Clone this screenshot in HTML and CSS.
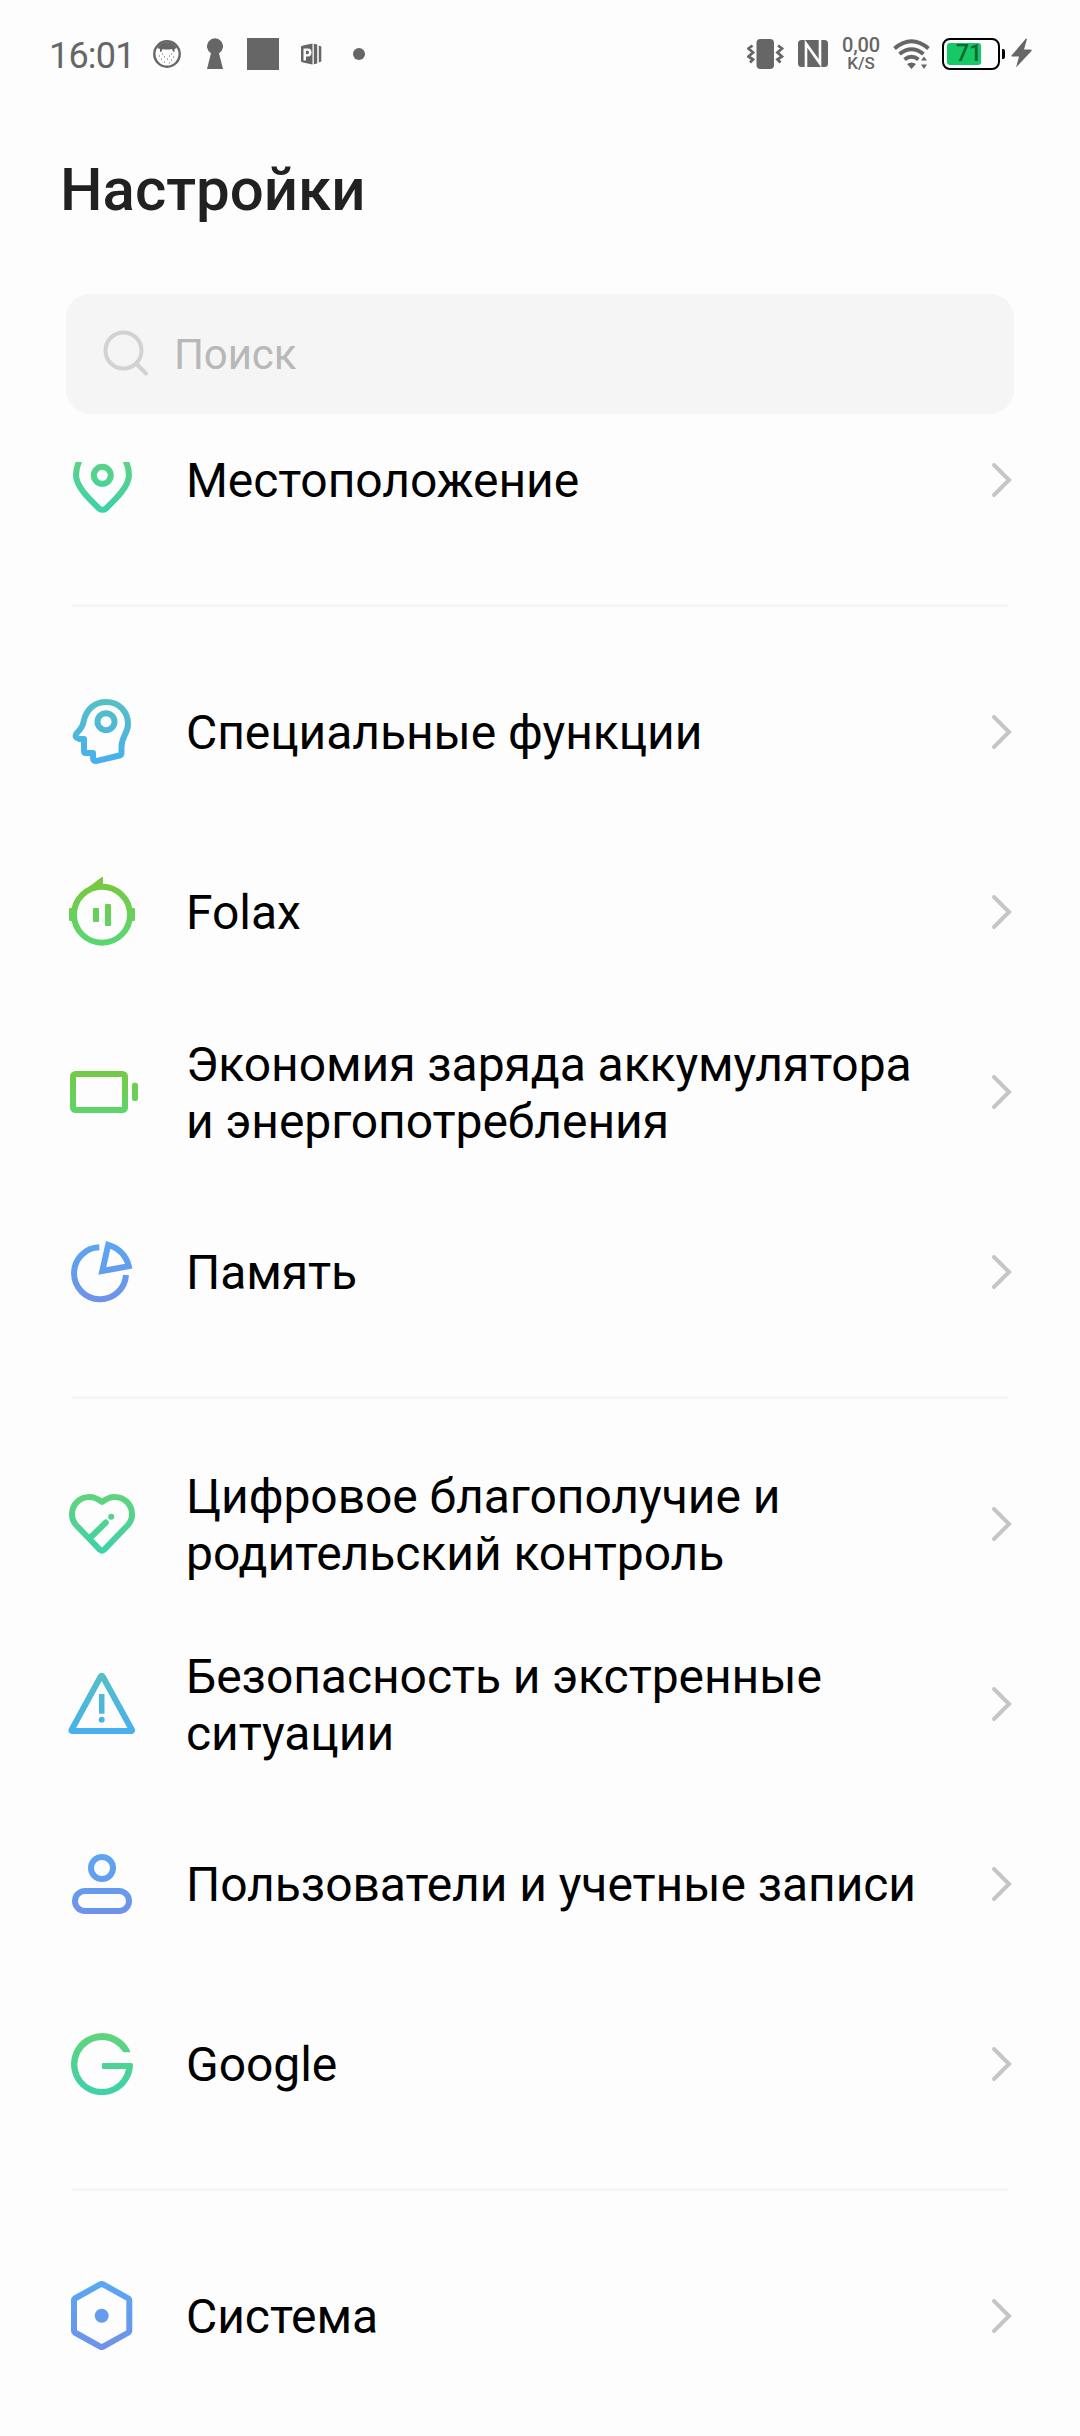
FILE: index.html
```html
<!DOCTYPE html>
<html lang="ru">
<head>
    <meta charset="UTF-8">
    <meta name="viewport" content="width=device-width, initial-scale=1.0">
    <title>Настройки</title>
    <link rel="stylesheet" href="styles.css">
</head>
<body>
    <!-- shared gradients and the row arrow -->
    <svg class="defs" width="0" height="0">
        <defs>
            <linearGradient id="mint" gradientUnits="userSpaceOnUse" x1="0" y1="4" x2="0" y2="68">
                <stop offset="0" stop-color="#62d47a"/><stop offset="1" stop-color="#3dd1ac"/>
            </linearGradient>
            <linearGradient id="aqua" gradientUnits="userSpaceOnUse" x1="0" y1="4" x2="0" y2="68">
                <stop offset="0" stop-color="#55c0c4"/><stop offset="1" stop-color="#47aff0"/>
            </linearGradient>
            <linearGradient id="lime" gradientUnits="userSpaceOnUse" x1="0" y1="10" x2="0" y2="62">
                <stop offset="0" stop-color="#78c940"/><stop offset="1" stop-color="#5ad670"/>
            </linearGradient>
            <linearGradient id="blue" gradientUnits="userSpaceOnUse" x1="0" y1="4" x2="0" y2="68">
                <stop offset="0" stop-color="#5aa7f2"/><stop offset="1" stop-color="#6f91ea"/>
            </linearGradient>
            <symbol id="arrow" viewBox="0 0 24 40">
                <path d="M4 5l15 15L4 35" fill="none" stroke="#c6c6c6" stroke-width="4" stroke-linecap="round" stroke-linejoin="miter"/>
            </symbol>
        </defs>
    </svg>

    <div class="statusbar">
        <div class="status-left">
            <span class="clock">16:01</span>
            <svg class="s-face" width="28" height="32" viewBox="0 0 28 32">
                <circle cx="14" cy="16" r="12.7" fill="none" stroke="#666" stroke-width="2.400"/>
                <path d="M4 10A11.500 11.500 0 0 1 24 10L21.500 11V14L20 13.500L19 11Q14 12 9.500 11L8.500 13.500L7 14V11z" fill="#666"/>
                <path d="M9 16h1.200M18 16h1.200M6 18h1M11 19h1M16 18h1M20 19h1M8 21h1M14 21h1M18 22h1M11 24h1M16 25h1" stroke="#666" stroke-width="1.200"/>
            </svg>
            <svg class="s-key" width="16" height="32" viewBox="0 0 16 32">
                <path d="M4 15.200A8 8 0 1 1 12 15.200L16 31H0z" fill="#666"/>
            </svg>
            <span class="s-square"></span>
            <svg class="s-app" width="21" height="32" viewBox="0 0 21 32">
                <path fill="#666" fill-rule="evenodd" d="M0 8.500L2 7.500L11.500 5.500V26.500L2 24.500L0 23.500zM2.500 10.500V22.500H5V18.500H7Q10.500 18.500 10.500 14.500Q10.500 10.500 7 10.500zM5 12.800H6.500Q8 12.800 8 14.500Q8 16.200 6.500 16.200H5z"/>
                <path fill="#666" d="M12.800 5.700L16.200 6.500V25.500L12.800 26.300zM17.800 7.500L20.300 8.500V23.500L17.800 24.500z"/>
            </svg>
            <span class="s-dot"></span>
        </div>
        <div class="status-right">
            <svg width="37" height="32" viewBox="0 0 37 32" fill="none" stroke="#666" stroke-width="2.800">
                <rect x="9.500" y="1" width="17.500" height="30" rx="4" fill="#666" stroke="none"/>
                <path d="M5.500 7.500L1.500 10.500L6 14.500L1.500 18.500L6 21.500L3 24.500M31 7.500L35 10.500L30.500 14.500L35 18.500L30.500 21.500L33.500 24.500"/>
            </svg>
            <svg class="s-nfc" width="30" height="32" viewBox="0 0 30 32">
                <rect y="2" width="30" height="27" rx="3.500" fill="#666"/>
                <path d="M8 29V5.500L20.500 23M22 2V25.500L10 8.500" fill="none" stroke="#fdfdfd" stroke-width="2.600"/>
            </svg>
            <div class="speed">
                <span class="speed-value">0,00</span>
                <span class="speed-unit">K/S</span>
            </div>
            <svg class="s-wifi" width="37" height="32" viewBox="0 0 37 32">
                <g fill="none" stroke="#666" stroke-width="4">
                    <path d="M1.500 10.500Q18.500 -4 35.500 10.500"/>
                    <path d="M6.500 16Q18.500 6.500 30.500 16"/>
                    <path d="M11.500 21.500Q18.500 16 25.500 21.500"/>
                </g>
                <path d="M14 26Q18.500 23 23 26L18.500 31zM28 22.500L31 18.500L34 22.500zM28 26.500L31 31L34 26.500z" fill="#666"/>
            </svg>
            <div class="battery">
                <div class="battery-level"></div>
                <span class="battery-text">71</span>
            </div>
            <span class="battery-tip"></span>
            <svg class="s-bolt" width="21" height="32" viewBox="0 0 21 32">
                <path d="M15 0.500L0.500 17.500Q0 18.500 1.500 18.500H8L5 29.500L20.500 13Q21 11.500 19.500 11.500H13L16 1z" fill="#666"/>
            </svg>
        </div>
    </div>

    <h1>Настройки</h1>

    <div class="search">
        <svg width="48" height="48" viewBox="0 0 48 48" fill="none" stroke="#d2d2d2" stroke-width="4" stroke-linecap="round">
            <circle cx="21.500" cy="20.500" r="18"/>
            <path d="M34.500 34L44 43.500"/>
        </svg>
        <span>Поиск</span>
    </div>

    <div class="list">
        <div class="group">
            <div class="row">
                <svg class="icon mint" viewBox="0 0 72 72">
                    <path d="M36.500 1C28 1 20 6 15.500 13C12 18.500 10 24 10 31C10 42 22 54 33 64.500Q36.500 67 40 64.500C51 54 63 42 63 31C63 24 61 18.500 57.500 13C53 6 45 1 36.500 1z"/>
                    <circle cx="36.300" cy="31.300" r="8.500"/>
                </svg>
                <span class="label">Местоположение</span>
                <svg class="arrow"><use href="#arrow"/></svg>
            </div>
        </div>
        <div class="group">
            <div class="row">
                <svg class="icon aqua" viewBox="0 0 72 72">
                    <path d="M10.500 37.500Q16.500 31.500 17.500 26C20 13 29 6 40 6C53 6 62 15.500 62 28C62 38 55.500 40 55.500 51V57Q55.500 59 53.500 59.500L31 64.800Q27 65.500 27 62V57H19.500Q18 57 18 55V43H13Q8 41.500 10.500 37.500z"/>
                    <circle cx="40" cy="25.700" r="8.500"/>
                </svg>
                <span class="label">Специальные функции</span>
                <svg class="arrow"><use href="#arrow"/></svg>
            </div>
            <div class="row">
                <svg class="icon lime" viewBox="0 0 72 72">
                    <circle cx="36" cy="38.700" r="28"/>
                    <path class="solid" d="M22 11.500L35.500 1.200Q37 .5 37 2V10zM4 32H9V45H4Q3 45 3 44V33Q3 32 4 32zM63 32H68Q69 32 69 33V44Q69 45 68 45H63z"/>
                    <rect class="solid" x="27" y="32" width="6" height="14" rx="1"/>
                    <rect class="solid" x="39" y="28" width="6" height="22" rx="1"/>
                </svg>
                <span class="label">Folax</span>
                <svg class="arrow"><use href="#arrow"/></svg>
            </div>
            <div class="row">
                <svg class="icon lime" viewBox="0 0 72 72">
                    <rect x="7" y="18" width="52" height="36" rx="2.500"/>
                    <rect class="solid" x="66" y="26.700" width="6" height="18.300" rx="2.500"/>
                </svg>
                <span class="label two-line">Экономия заряда аккумулятора и энергопотребления</span>
                <svg class="arrow"><use href="#arrow"/></svg>
            </div>
            <div class="row">
                <svg class="icon blue sharp" viewBox="0 0 72 72">
                    <path d="M33.300 11.300A26 26 0 1 0 60 39"/>
                    <path d="M42.200 8.800A29 29 0 0 1 62.800 30.200L36.300 35z"/>
                </svg>
                <span class="label">Память</span>
                <svg class="arrow"><use href="#arrow"/></svg>
            </div>
        </div>
        <div class="group">
            <div class="row">
                <svg class="icon mint" viewBox="0 0 72 72">
                    <path d="M36 14C31.500 10.500 28 9 23.500 9C13 9 6 17 6 26.500C6 31 8 35 11 38L34 61.800Q36 63.500 38 61.800L61 38C64 35 66 31 66 26.500C66 17 59 9 48.500 9C44 9 40.500 10.500 36 14zM25 49L39.800 34.500"/>
                    <circle class="solid" cx="45.200" cy="28.700" r="3"/>
                </svg>
                <span class="label two-line">Цифровое благополучие и родительский контроль</span>
                <svg class="arrow"><use href="#arrow"/></svg>
            </div>
            <div class="row">
                <svg class="icon aqua" viewBox="0 0 72 72">
                    <path d="M34.700 8.500Q35.700 7 36.700 8.500L66 62Q66.500 63 65.500 63H6Q5 63 5.500 62z"/>
                    <rect class="solid" x="33" y="26" width="5.500" height="19.700"/>
                    <circle class="solid" cx="35.700" cy="51.700" r="3"/>
                </svg>
                <span class="label two-line">Безопасность и экстренные ситуации</span>
                <svg class="arrow"><use href="#arrow"/></svg>
            </div>
            <div class="row">
                <svg class="icon blue" viewBox="0 0 72 72">
                    <circle cx="36" cy="20" r="11"/>
                    <rect x="9" y="43" width="54" height="20" rx="10"/>
                </svg>
                <span class="label">Пользователи и учетные записи</span>
                <svg class="arrow"><use href="#arrow"/></svg>
            </div>
            <div class="row">
                <svg class="icon mint" viewBox="0 0 72 72">
                    <path class="solid" d="M63.500 24.300Q64.700 24.300 64.200 23.200A31 31 0 1 0 67 37Q67 35 65.500 35H37Q36 35 36 36V40Q36 41 37 41H60A24.500 24.500 0 1 1 56.500 23.200Q57 24.300 58.200 24.300z"/>
                </svg>
                <span class="label">Google</span>
                <svg class="arrow"><use href="#arrow"/></svg>
            </div>
        </div>
        <div class="group">
            <div class="row">
                <svg class="icon blue" viewBox="0 0 72 72">
                    <path d="M34.700 4.200Q35.700 3.700 36.700 4.200L62.500 18.500Q63.300 19 63.300 20V51Q63.300 52 62.500 52.500L36.700 66.800Q35.700 67.300 34.700 66.800L8.800 52.500Q8 52 8 51V20Q8 19 8.800 18.500z"/>
                    <circle class="solid" cx="35.700" cy="35.700" r="7"/>
                </svg>
                <span class="label">Система</span>
                <svg class="arrow"><use href="#arrow"/></svg>
            </div>
        </div>
    </div>
</body>
</html>
```

FILE: styles.css
```css
* {
    box-sizing: border-box;
}
body {
    font-family: Roboto, "Noto Sans", sans-serif;
    margin: 0;
    height: 2436px;
    overflow: hidden;
    background-color: #fdfdfd;
    color: #000;
    display: flex;
    flex-direction: column;
}
.defs {
    position: absolute;
}

/* status bar */
.statusbar {
    height: 108px;
    flex-shrink: 0;
    display: flex;
    justify-content: space-between;
    align-items: center;
    padding: 0 48px 0 49px;
    color: #666;
}
.status-left,
.status-right {
    display: flex;
    align-items: center;
}
.clock {
    width: 104px;
    font-size: 36px;
    line-height: 42px;
    letter-spacing: -0.8px;
    padding-top: 3px;
}
.s-key {
    margin-left: 26px;
}
.s-square {
    width: 32px;
    height: 32px;
    margin-left: 24px;
    background-color: #666;
}
.s-app {
    margin-left: 22px;
}
.s-dot {
    width: 12px;
    height: 12px;
    margin-left: 31px;
    border-radius: 50%;
    background-color: #666;
}
.s-nfc {
    margin-left: 14px;
}
.speed {
    width: 40px;
    margin-left: 13px;
    display: flex;
    flex-direction: column;
    align-items: center;
    font-weight: 500;
}
.speed-value {
    font-size: 20px;
    line-height: 18px;
    letter-spacing: -0.2px;
}
.speed-unit {
    font-size: 17px;
    line-height: 19px;
}
.s-wifi {
    margin-left: 12px;
}
.battery {
    width: 58px;
    height: 32px;
    margin-left: 12px;
    padding: 3px;
    border: 2px solid #000;
    border-radius: 8px;
    position: relative;
}
.battery-level {
    width: 34px;
    height: 22px;
    border-radius: 3px;
    background-color: #17c964;
}
.battery-text {
    position: absolute;
    left: 12px;
    top: 1px;
    font-size: 23px;
    line-height: 26px;
    font-weight: 500;
    color: #0b6534;
}
.battery-tip {
    width: 3px;
    height: 10px;
    margin-left: 2px;
    border-radius: 0 2px 2px 0;
    background-color: #000;
}
.s-bolt {
    margin-left: 6px;
}

/* header */
h1 {
    margin: 47px 0 0 60px;
    font-size: 60px;
    line-height: 70px;
    font-weight: 500;
    color: #212121;
}
.search {
    height: 120px;
    flex-shrink: 0;
    margin: 69px 66px 0;
    padding: 0 36px;
    border-radius: 24px;
    background-color: #f5f5f5;
    display: flex;
    align-items: center;
    gap: 24px;
    font-size: 42px;
    letter-spacing: -0.1px;
    color: #b8b8b8;
}

/* list is scrolled, the first row is cut off at the top */
.list {
    flex: 1;
    margin-top: 48px;
    padding: 0 66px;
    overflow: hidden;
}
.group:first-child {
    margin-top: -72px;
}
.group + .group::before {
    content: "";
    display: block;
    height: 3px;
    margin: 34px 6px 35px 6px;
    background-color: #f6f6f6;
}
.row {
    height: 180px;
    display: flex;
    align-items: center;
}
.icon {
    width: 72px;
    height: 72px;
    flex-shrink: 0;
    fill: none;
    stroke-width: 6;
    stroke-linecap: round;
    stroke-linejoin: round;
}
.icon .solid {
    stroke: none;
}
.sharp {
    stroke-linecap: butt;
    stroke-linejoin: miter;
}
.mint {
    stroke: url(#mint);
}
.mint .solid {
    fill: url(#mint);
}
.aqua {
    stroke: url(#aqua);
}
.aqua .solid {
    fill: url(#aqua);
}
.lime {
    stroke: url(#lime);
}
.lime .solid {
    fill: url(#lime);
}
.blue {
    stroke: url(#blue);
}
.blue .solid {
    fill: url(#blue);
}
.label {
    flex: 1;
    margin: 0 56px 0 48px;
    font-size: 48px;
    line-height: 57px;
    letter-spacing: -0.06px;
}
.two-line {
    padding-top: 2px;
}
.arrow {
    width: 24px;
    height: 40px;
    flex-shrink: 0;
}
```
